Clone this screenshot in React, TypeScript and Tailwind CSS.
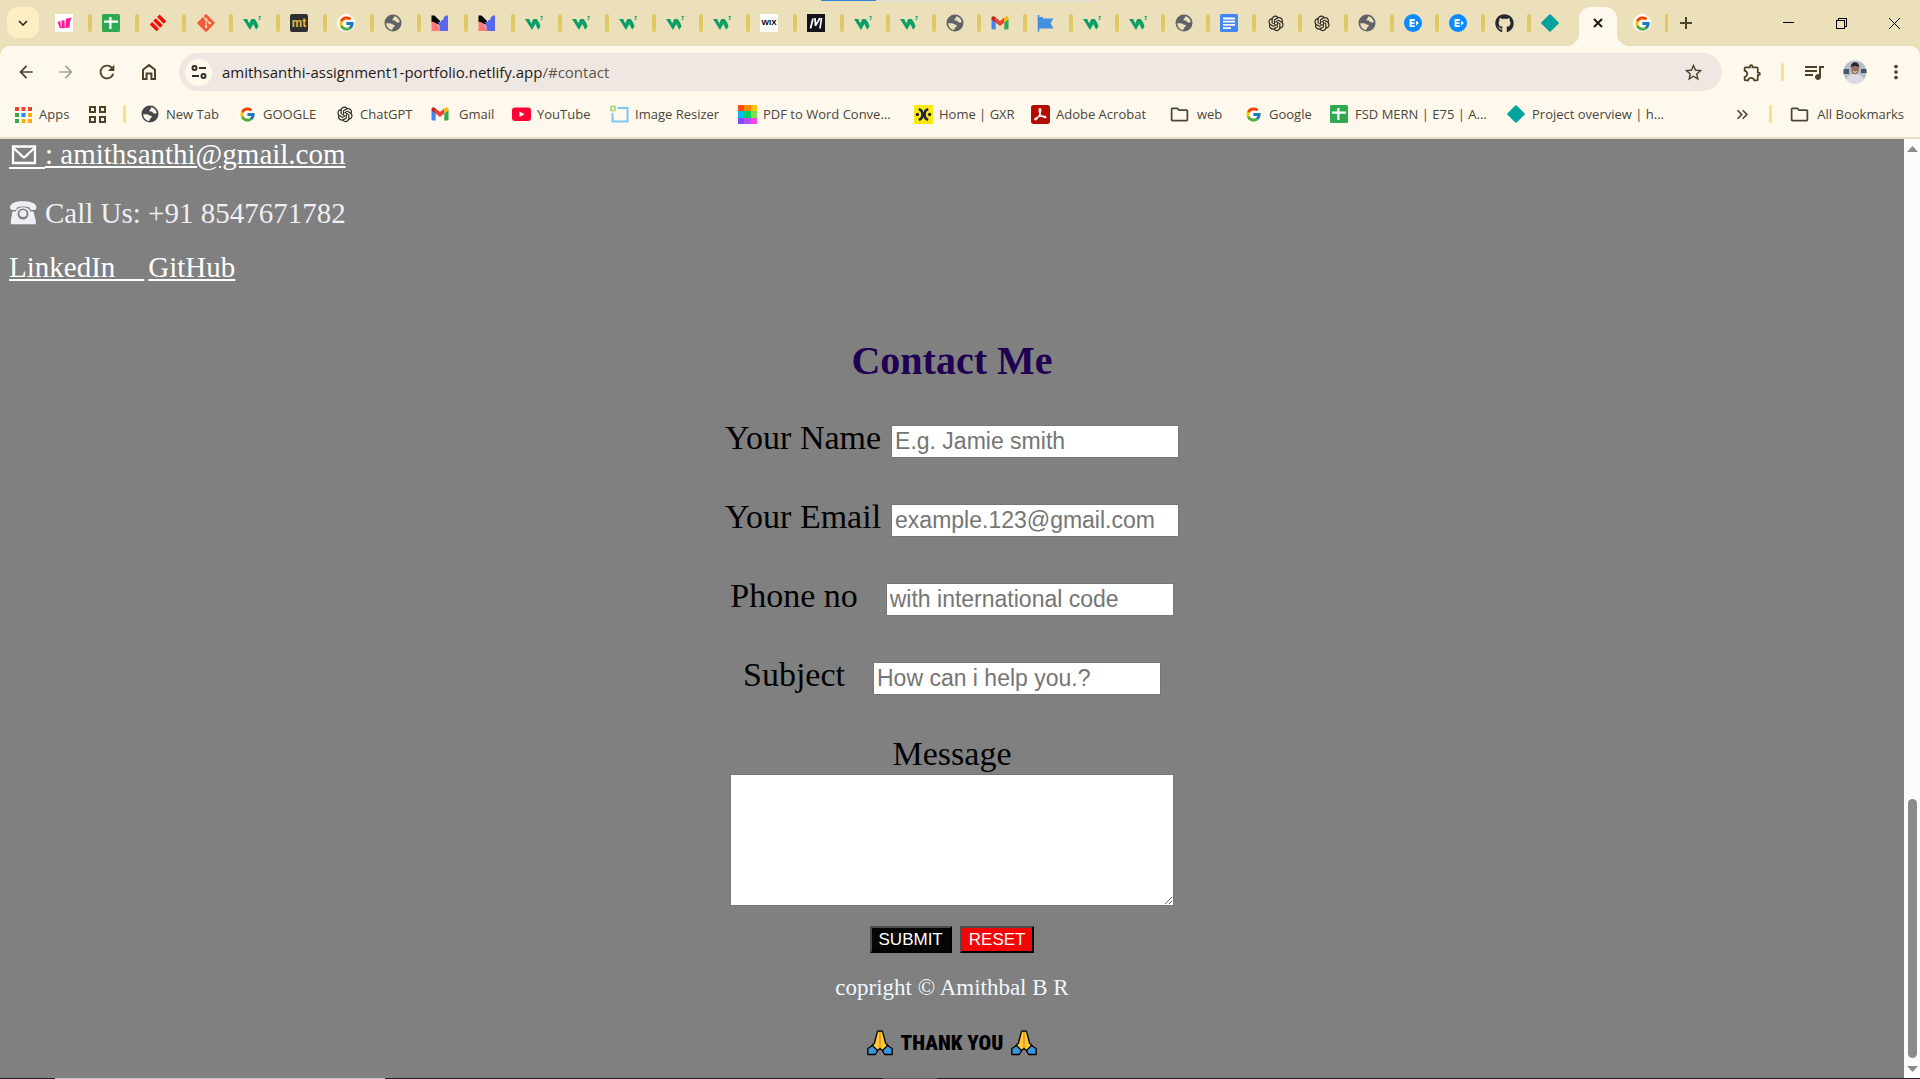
import React from "react";
import type { ReactNode } from "react";
import { FcGoogle } from "react-icons/fc";
import { FaGithub, FaGitAlt } from "react-icons/fa";
import { AiOutlineOpenAI } from "react-icons/ai";
import {
  MdArrowBack,
  MdArrowForward,
  MdRefresh,
  MdStarBorder,
  MdOutlineExtension,
  MdQueueMusic,
  MdMoreVert,
  MdExpandMore,
  MdOutlineFolder,
  MdKeyboardDoubleArrowRight,
} from "react-icons/md";

const W3 = () => (
  <svg viewBox="0 0 18 18" className="size-[18px]" fill="none">
    <path d="M0 5h4.200l2 4.500L8.300 5h3.400l2.700 4 1.100 3.500-2.300 3.300L10.300 10l-3.300 6z" fill="#0a9f66" />
    <path d="M15.500 2.500h2l-1 1.600c1 .2 1.300 1.800-.9 1.600" stroke="#0a9f66" strokeWidth="0.9" />
  </svg>
);

const Globe = ({ dark = false }: { dark?: boolean }) => (
  <svg viewBox="0 0 18 18" className="size-[18px]">
    <circle cx="9" cy="9" r="8.500" fill={dark ? "#44474b" : "#5f6368"} />
    <path
      d="M10.300 2.200c2.900.5 5 2.800 5.500 5.700-1 .7-2.200.8-3.400.3-.9-.4-.6-1.500-1.700-1.700-1.200-.2-2 .3-2.200-.8-.2-1 .9-1 1.200-1.800zM2.200 9.200h3.600c1.500 0 2 .8 3 1.300 1 .4 2 .2 2 1.200 0 1.300-1.500 1.300-1.900 2.200-.3.800-.2 1.400-.9 2C4.700 15.500 2.300 12.700 2.200 9.200z"
      fill={dark ? "#fff8ec" : "#ece0bb"}
    />
  </svg>
);

const Google = () => (
  <span className="flex size-[18px] items-center justify-center rounded-full bg-white">
    <FcGoogle size={17} />
  </span>
);

const Gmail = () => (
  <svg viewBox="0 0 18 18" className="size-[18px]">
    <path d="M0.500 5v9.300c0 .6.500 1.200 1.200 1.200h3V8z" fill="#4285f4" />
    <path d="M17.500 5v9.300c0 .6-.5 1.200-1.200 1.200h-3V8z" fill="#34a853" />
    <path d="M4.700 3.600 9 6.900l4.300-3.300v5L9 11.900 4.700 8.600z" fill="#ea4335" />
    <path d="M4.700 8.600V3.600L3.500 2.700C2.200 1.800.5 2.600.500 4.200v1.200z" fill="#c5221f" />
    <path d="M13.300 8.600V3.600l1.200-.9c1.300-.9 3-.1 3 1.500v1.200z" fill="#fbbc04" />
  </svg>
);

const Sheets = () => (
  <svg viewBox="0 0 18 18" className="size-[18px]">
    <rect width="18" height="18" rx="1.500" fill="#2fa84f" />
    <path d="M7.300 3h2.200v3.600H16v2.200H9.500V15H7.300V8.800H2V6.600h5.300z" fill="#fff" />
  </svg>
);

const Neon = () => (
  <svg viewBox="0 0 18 18" className="size-[18px]">
    <path d="M0.500 1.500h3L9 7v4L.500 8z" fill="#000" />
    <path d="M0.500 7.500C5 8 8.500 12 9 17H.500z" fill="#ff7a7a" />
    <path d="M6.500 7.500c2 1 3.500 1 4-1.500l1.500 0 1-3 2-1.500h2V17H9C8.800 13 8 10 6.500 7.500z" fill="#5a66f0" />
  </svg>
);

const PinkMark = () => (
  <svg viewBox="0 0 18 18" className="size-[18px]">
    <rect width="18" height="18" fill="#fff" />
    <path d="M2.500 7.800l2.800-.5.8 4.300.4-5 3-.3.300 5.200 1.200-6.700 5.800-1.300-1.500 3-.8 6.900-6.300.9-3.500-.4z" fill="#ff1a9a" />
    <path d="M6.200 8v5M10.300 7v6.500" stroke="#fff" strokeWidth="0.700" />
  </svg>
);

const RedStripes = () => (
  <svg viewBox="0 0 18 18" className="size-[18px]">
    <g stroke="#fb0a0a" strokeWidth="3.500">
      <path d="M9.300 1.800l6.700 6.700M5.500 5.500l7 7M2 9.300l6.700 6.700" />
    </g>
  </svg>
);

const Mt = () => (
  <span className="flex size-[18px] items-center justify-center rounded-xs bg-[#2f2f33] font-['Roboto'] text-[12px] leading-none font-bold text-[#e0b93a]">
    mt
  </span>
);

const Wix = () => (
  <span className="flex size-[18px] items-center justify-center bg-white font-['Liberation_Sans'] text-[8px] leading-none font-bold text-black">
    WIX
  </span>
);

const DarkM = () => (
  <svg viewBox="0 0 18 18" className="size-[18px]">
    <rect width="18" height="18" fill="#12121c" />
    <path d="M3.500 14.500 6 4.500M8 4l.5 8M8.500 11.500 13 4M14.500 4 13 14.500" fill="none" stroke="#fff" strokeWidth="1.700" />
  </svg>
);

const Flag = () => (
  <svg viewBox="0 0 18 18" className="size-[18px]">
    <path d="M1.500 1v16.500" stroke="#3b8ae6" strokeWidth="1.600" />
    <path d="M2 3h4v1.500h10.500L13.500 9l3 5.500H2z" fill="#458fe3" />
  </svg>
);

const Docs = () => (
  <svg viewBox="0 0 18 18" className="size-[18px]">
    <rect width="18" height="18" rx="1.500" fill="#4285f4" />
    <path d="M3 4.500h12M3 7.700h12M3 10.900h12M3 14.100h8" stroke="#fff" strokeWidth="1.800" />
  </svg>
);

const Ecircle = () => (
  <svg viewBox="0 0 18 18" className="size-[18px]">
    <circle cx="9" cy="9" r="9" fill="#0a8bff" />
    <path d="M10.800 6H6.500v6.200h4.300M6.500 9.100h4" fill="none" stroke="#fff" strokeWidth="1.800" />
    <path d="M12 6.800l3 2.300-3 2.300z" fill="#fff" />
  </svg>
);

const Diamond = () => (
  <svg viewBox="0 0 18 18" className="size-[18px]">
    <path d="M9 1.200 16.800 9 9 16.800 1.200 9z" fill="#05a29e" stroke="#05a29e" strokeWidth="2" strokeLinejoin="round" />
  </svg>
);

const Gpt = () => <AiOutlineOpenAI size={20} color="#2c2a22" />;
const Git = () => <FaGitAlt size={20} color="#f4593a" />;

const AppsGrid = () => (
  <svg viewBox="0 0 17 17" className="size-[17px]">
    <path d="M0 1h4v4H0zM6.500 1h4v4h-4zM13 1h4v4h-4z" fill="#ea4335" />
    <path d="M0 7h4v4H0zM0 13h4v4H0z" fill="#34a853" />
    <path d="M6.500 7h4v4h-4z" fill="#1a8cff" />
    <path d="M6.500 13h4v4h-4zM13 7h4v4h-4zM13 13h4v4h-4z" fill="#fbab04" />
  </svg>
);

const YouTube = () => (
  <svg viewBox="0 0 19 18" className="h-[18px] w-[19px]">
    <rect y="2.500" width="19" height="13.500" rx="3" fill="#ff0033" />
    <path d="M7.500 6.500l5 2.700-5 2.700z" fill="#fff" />
  </svg>
);

const Resizer = () => (
  <svg viewBox="0 0 19 18" className="h-[18px] w-[19px]" fill="none">
    <path d="M7.500 3h10v13.500H2.500V8" stroke="#7cc6f4" strokeWidth="2" />
    <rect x="1" y="1.500" width="4" height="4" stroke="#a3d977" strokeWidth="1.600" />
  </svg>
);

const RainbowGrid = () => (
  <svg viewBox="0 0 18 18" className="size-[19px]" shapeRendering="crispEdges">
    <path d="M0 0h6v6H0z" fill="#ff4d12" />
    <path d="M6 0h6v6H6z" fill="#ff8a00" />
    <path d="M12 0h6v6h-6z" fill="#ffc400" />
    <path d="M0 6h6v6H0z" fill="#00b8f5" />
    <path d="M6 6h6v6H6z" fill="#00cf62" />
    <path d="M12 6h6v6h-6z" fill="#7ae04a" />
    <path d="M0 12h6v6H0z" fill="#7d4dff" />
    <path d="M6 12h6v6H6z" fill="#b84dff" />
    <path d="M12 12h6v6h-6z" fill="#ff45e6" />
  </svg>
);

const Gxr = () => (
  <svg viewBox="0 0 18 18" className="size-[19px]">
    <rect width="18" height="18" fill="#fbea12" />
    <path d="M4.500 4c2 .3 3.500 2 3.500 5s-1.500 4.700-3.500 5M13.500 4c-2 .3-3.500 2-3.500 5s1.500 4.700 3.500 5" fill="none" stroke="#1d2433" strokeWidth="2.400" />
    <circle cx="3.200" cy="9" r="1.600" fill="#1d2433" />
    <circle cx="14.800" cy="9" r="1.600" fill="#1d2433" />
  </svg>
);

const Acrobat = () => (
  <svg viewBox="0 0 18 18" className="size-[19px]">
    <rect width="18" height="18" rx="2.500" fill="#b30b00" />
    <path
      d="M8.300 3.500c1.800-.3 1 4-.6 6.600-1.200 2-2.700 4.100-3.700 3.900-1.300-.6 1-2.400 4-3.100 2.800-.7 6.200-.5 6.200.5 0 1.200-3.100.4-4.700-1.500C7.700 7.900 7 3.900 8.300 3.500z"
      fill="none"
      stroke="#fff"
      strokeWidth="1.200"
    />
  </svg>
);

const HomeIcon = () => (
  <svg viewBox="0 0 16 18" className="h-[18px] w-4" fill="none" stroke="#4b4328" strokeWidth="2">
    <path d="M2 6.800 8 2l6 4.800V16h-3.600v-5.500H5.600V16H2z" />
  </svg>
);

const Tune = () => (
  <svg viewBox="0 0 16 16" className="size-4" fill="none" stroke="#33302a" strokeWidth="2">
    <circle cx="3.500" cy="4" r="2" />
    <path d="M8 4h7M1 12h7" />
    <circle cx="12.500" cy="12" r="2" />
  </svg>
);

const Avatar = () => (
  <svg viewBox="0 0 24 24" className="size-6">
    <defs>
      <clipPath id="avatar-clip">
        <circle cx="12" cy="12" r="11.500" />
      </clipPath>
    </defs>
    <g clipPath="url(#avatar-clip)">
      <rect width="24" height="24" fill="#b4bcc6" />
      <path d="M0 9h6v5H0zM18 9h6v4h-6z" fill="#4b5460" />
      <path d="M2 24c0-7 5-10 10-10s10 3 10 10z" fill="#dcd8e4" />
      <ellipse cx="12" cy="9" rx="3.800" ry="5.300" fill="#9a6f62" />
      <path d="M7.700 7.500c0-7 8.600-7 8.600 0-2-2-6.600-2-8.600 0z" fill="#29242a" />
      <path d="M10.300 11.500c1.200 1 2.200 1 3.400 0" stroke="#fff" strokeWidth="1" fill="none" />
    </g>
  </svg>
);

const Hands = () => (
  <svg viewBox="0 0 26 26" className="size-[26px]" stroke="#000" strokeWidth="1.300" strokeLinejoin="round">
    <path d="M10.500 1.200c1-.7 2-.3 2.500.6.500-.9 1.500-1.300 2.500-.6L18.500 13l2.500 2.500-5 5.500-3-2.500-3 2.500-5-5.500L7.500 13z" fill="#ffc83d" />
    <path d="M5.500 15.500 10.500 20.500 8.500 24.500H.8V18.500z" fill="#3a96dd" />
    <path d="M20.500 15.500 15.500 20.500l2 4h7.700V18.500z" fill="#3a96dd" />
    <path d="M13 2v16" stroke="#e09a1c" strokeWidth="1.600" />
  </svg>
);

const Envelope = () => (
  <svg viewBox="0 0 26 20" className="h-5 w-[26px]" fill="none" stroke="#fff" strokeWidth="2.300">
    <path d="M2 1.500h22v16.500H2zM2.500 3l9.300 8.700c.8.700 1.600.7 2.400 0L23.500 3" />
  </svg>
);

const Telephone = () => (
  <svg viewBox="0 0 28 26" className="h-[26px] w-7" fill="#efeff4">
    <path d="M1 7.500C1 3 7 1.200 14 1.200S27.500 3 27.500 7.500c0 2-1.500 2.500-4 2.500-2 0-2.700-.8-2.700-2.300C18.500 6 10 6 7.800 7.700 7.800 9.200 7 10 5 10c-2.500 0-4-.5-4-2.500z" />
    <path
      fillRule="evenodd"
      d="M3.500 11.500h3.200C7.500 9 10 7.300 14 7.300s6.700 1.700 7.500 4.200h3l2.300 9.500v3.200H1.800V21zM14 8.500a5.500 5.500 0 100 11 5.500 5.500 0 000-11z"
    />
    <circle cx="14" cy="13.500" r="3.600" />
  </svg>
);

const Triangle = ({ up = false }: { up?: boolean }) => (
  <svg viewBox="0 0 11 6" className="h-1.5 w-[11px]" fill="#8b8b8b">
    <path d={up ? "M0 6 5.500 0 11 6z" : "M0 0h11L5.500 6z"} />
  </svg>
);

const tabsA: [string, ReactNode][] = [
  ["Wix site", <PinkMark />],
  ["Sheet", <Sheets />],
  ["Entri", <RedStripes />],
  ["Git", <Git />],
  ["W3Schools", <W3 />],
  ["mt", <Mt />],
  ["Google", <Google />],
  ["Page", <Globe />],
  ["Mockup", <Neon />],
  ["Mockup", <Neon />],
  ["W3Schools", <W3 />],
  ["W3Schools", <W3 />],
  ["W3Schools", <W3 />],
  ["W3Schools", <W3 />],
  ["W3Schools", <W3 />],
  ["Wix", <Wix />],
  ["M", <DarkM />],
];

const tabsB: [string, ReactNode][] = [
  ["W3Schools", <W3 />],
  ["W3Schools", <W3 />],
  ["Page", <Globe />],
  ["Gmail", <Gmail />],
  ["Flag", <Flag />],
  ["W3Schools", <W3 />],
  ["W3Schools", <W3 />],
  ["Page", <Globe />],
  ["Docs", <Docs />],
  ["ChatGPT", <Gpt />],
  ["ChatGPT", <Gpt />],
  ["Page", <Globe />],
  ["Entri", <Ecircle />],
  ["Entri", <Ecircle />],
  ["GitHub", <FaGithub size={19} color="#24292f" />],
];

const Tab = ({ label, icon }: { label: string; icon: ReactNode }) => (
  <button aria-label={label} className="flex h-[18px] flex-1 items-center justify-between pl-2.5">
    {icon}
    <span className="h-[18px] w-1 rounded-full bg-[#e0c862]" />
  </button>
);

const bookmarks: { label: string; icon: ReactNode; width: string; wide?: boolean }[] = [
  { label: "New Tab", icon: <Globe dark />, width: "w-[97px]" },
  { label: "GOOGLE", icon: <Google />, width: "w-[97px]" },
  { label: "ChatGPT", icon: <Gpt />, width: "w-[96px]" },
  { label: "Gmail", icon: <Gmail />, width: "w-[81px]", wide: true },
  { label: "YouTube", icon: <YouTube />, width: "w-[98px]" },
  { label: "Image Resizer", icon: <Resizer />, width: "w-[128px]" },
  { label: "PDF to Word Conve...", icon: <RainbowGrid />, width: "w-[176px]" },
  { label: "Home | GXR", icon: <Gxr />, width: "w-[117px]" },
  { label: "Adobe Acrobat", icon: <Acrobat />, width: "w-[138px]" },
  { label: "web", icon: <MdOutlineFolder size={21} />, width: "w-[75px]", wide: true },
  { label: "Google", icon: <Google />, width: "w-[86px]" },
  { label: "FSD MERN | E75 | A...", icon: <Sheets />, width: "w-[177px]" },
  { label: "Project overview | h...", icon: <Diamond />, width: "w-[170px]" },
];

const fields = [
  { id: "name", label: "Your Name", placeholder: "E.g. Jamie smith", type: "text", gap: "gap-2.5" },
  { id: "email", label: "Your Email", placeholder: "example.123@gmail.com", type: "email", gap: "gap-2.5" },
  { id: "phone", label: "Phone no", placeholder: "with international code", type: "tel", gap: "gap-7" },
  { id: "subject", label: "Subject", placeholder: "How can i help you.?", type: "text", gap: "gap-7" },
];

function TabStrip() {
  return (
    <div className="relative flex h-[46px] bg-[#ece0bb]">
      <div className="absolute top-0 left-[821px] flex h-px w-[276px] bg-[#dedede]">
        <span className="w-[55px] bg-[#2b88d8]" />
      </div>
      <button aria-label="Search tabs" className="mt-[7px] ml-[7px] flex h-[31px] w-8 items-center justify-center rounded-[10px] bg-[#fdefc3] text-[#1f1b10]">
        <MdExpandMore size={18} />
      </button>
      <div className="ml-1.5 flex w-[799px] items-center">
        {tabsA.map(([label, icon], i) => (
          <Tab key={i} label={label} icon={icon} />
        ))}
      </div>
      <div className="flex w-[687px] items-center">
        {tabsB.map(([label, icon], i) => (
          <Tab key={i} label={label} icon={icon} />
        ))}
      </div>
      <button aria-label="Netlify" className="ml-2.5">
        <Diamond />
      </button>
      <div className="relative mt-[7px] ml-5 flex w-[38px] justify-center rounded-t-[12px] bg-[#fff8ec]">
        <span className="absolute bottom-0 -left-3 size-3 bg-[radial-gradient(circle_at_top_left,transparent_12px,#fff8ec_12px)]" />
        <span className="absolute -right-3 bottom-0 size-3 bg-[radial-gradient(circle_at_top_right,transparent_12px,#fff8ec_12px)]" />
        <button aria-label="Close tab" className="flex h-8 items-center">
          <svg viewBox="0 0 10 10" className="size-2.5" stroke="#1f1b10" strokeWidth="2">
            <path d="M1 1l8 8M9 1L1 9" />
          </svg>
        </button>
      </div>
      <button aria-label="Google" className="ml-4">
        <Google />
      </button>
      <span className="mt-3.5 ml-3.5 h-[18px] w-[3px] rounded-full bg-[#e0c862]" />
      <button aria-label="New tab" className="ml-3">
        <svg viewBox="0 0 12 12" className="size-3" stroke="#4b4328" strokeWidth="2">
          <path d="M6 0v12M0 6h12" />
        </svg>
      </button>
      <div className="mr-5 ml-auto flex items-center gap-[42px]">
        <button aria-label="Minimize">
          <svg viewBox="0 0 11 11" className="size-[11px]" stroke="#000" strokeWidth="1" shapeRendering="crispEdges">
            <path d="M0 4.500h11" />
          </svg>
        </button>
        <button aria-label="Restore">
          <svg viewBox="0 0 11 11" className="size-[11px]" fill="none" stroke="#000" strokeWidth="1" shapeRendering="crispEdges">
            <path d="M.5 2.500h8v8h-8zM2.500 2.500v-2h8v8h-2" />
          </svg>
        </button>
        <button aria-label="Close">
          <svg viewBox="0 0 11 11" className="size-[11px]" stroke="#000" strokeWidth="1">
            <path d="M0 0l11 11M11 0L0 11" />
          </svg>
        </button>
      </div>
    </div>
  );
}

function Toolbar() {
  return (
    <div className="bg-[#ece0bb]">
      <div className="flex items-center rounded-t-[10px] bg-[#fff8ec] pt-[7px] pr-[13px] pb-2 pl-4 text-[#4b4328]">
        <button aria-label="Back">
          <MdArrowBack size={20} />
        </button>
        <button aria-label="Forward" className="ml-5 text-[#a8a394]">
          <MdArrowForward size={20} />
        </button>
        <button aria-label="Reload" className="ml-5">
          <MdRefresh size={22} />
        </button>
        <button aria-label="Home" className="ml-[23px]">
          <HomeIcon />
        </button>
        <div className="ml-[22px] flex h-[38px] flex-1 items-center rounded-full bg-[#efe7e1] pr-[18px] pl-1.5">
          <button aria-label="Site information" className="flex size-[27px] items-center justify-center rounded-full bg-[#fff8ec]">
            <Tune />
          </button>
          <div className="ml-2.5 flex-1 text-[15px] leading-6 text-[#1f1b16]">
            amithsanthi-assignment1-portfolio.netlify.app<span className="text-[#5a554c]">/#contact</span>
          </div>
          <button aria-label="Bookmark this page">
            <MdStarBorder size={21} />
          </button>
        </div>
        <button aria-label="Extensions" className="ml-5">
          <MdOutlineExtension size={21} />
        </button>
        <span className="ml-[18px] h-[18px] w-[3px] rounded-full bg-[#fce083]" />
        <button aria-label="Media" className="ml-[18px]">
          <MdQueueMusic size={24} />
        </button>
        <button aria-label="Profile" className="ml-[17px]">
          <Avatar />
        </button>
        <button aria-label="Menu" className="ml-[18px]">
          <MdMoreVert size={22} />
        </button>
      </div>
    </div>
  );
}

function BookmarksBar() {
  return (
    <nav className="flex h-10 items-center border-b-2 border-[#e6dfca] bg-[#fff8ec] pr-4 pb-2 pl-[15px] text-[13px] leading-5 whitespace-nowrap text-[#4a463d]">
      <a href="#apps" className="flex w-[74px] items-center gap-[7px]">
        <AppsGrid />
        Apps
      </a>
      <button aria-label="Tab groups" className="mr-[17px]">
        <svg viewBox="0 0 17 17" className="size-[17px]" fill="none" stroke="#4b4328" strokeWidth="2">
          <path d="M1 1h5v5H1zM11 1h5v5h-5zM1 11h5v5H1zM11 11h5v5h-5z" />
        </svg>
      </button>
      <span className="mr-[15px] h-[18px] w-[3px] rounded-full bg-[#fce083]" />
      {bookmarks.map((b, i) => (
        <a key={i} href="#bookmark" className={"flex items-center " + b.width}>
          <span className={b.wide ? "w-7 shrink-0" : "w-[25px] shrink-0"}>{b.icon}</span>
          {b.label}
        </a>
      ))}
      <button aria-label="More bookmarks" className="ml-auto">
        <MdKeyboardDoubleArrowRight size={19} />
      </button>
      <span className="mx-[17px] h-[18px] w-[3px] rounded-full bg-[#fce083]" />
      <a href="#all" className="flex items-center gap-[7px]">
        <MdOutlineFolder size={21} />
        All Bookmarks
      </a>
    </nav>
  );
}

function ContactPage() {
  return (
    <main className="flex-1 bg-[#808080] font-['Liberation_Serif',serif]">
      <div className="flex flex-col items-start px-[9px] text-[29px] leading-[30px] text-white">
        <a href="mailto:amithsanthi@gmail.com" className="flex items-start">
          <span className="h-[30px] w-9 border-b-2 border-white pt-1.5 pl-0.5">
            <Envelope />
          </span>
          <span className="underline">: amithsanthi@gmail.com</span>
        </a>
        <p className="mt-[29px] flex items-center gap-2 text-[#efeff4]">
          <Telephone />
          Call Us: +91 8547671782
        </p>
        <p className="mt-6 flex gap-1">
          <a href="#linkedin" className="whitespace-pre underline">
            {"LinkedIn\u00a0\u00a0\u00a0\u00a0"}
          </a>
          <a href="#github" className="underline">
            GitHub
          </a>
        </p>
      </div>

      <form className="mt-[57px] flex flex-col items-center" onSubmit={(e) => e.preventDefault()}>
        <h1 className="text-[40px] leading-[44px] font-bold text-[#200052]">Contact Me</h1>
        <div className="mt-[35px] flex flex-col items-center gap-[39px] text-[34px] leading-10 text-black">
          {fields.map((f) => (
            <div key={f.id} className={"flex h-10 items-baseline " + f.gap}>
              <label htmlFor={f.id}>{f.label}</label>
              <input
                id={f.id}
                type={f.type}
                placeholder={f.placeholder}
                className="h-[33px] w-72 border border-[#767676] bg-white px-[3px] py-0.5 font-['Liberation_Sans',sans-serif] text-[23px] leading-[27px] placeholder:text-[#757575]"
              />
            </div>
          ))}
          <label htmlFor="message">Message</label>
        </div>
        <textarea id="message" className="h-[132px] w-[444px] border border-[#767676] bg-white p-[3px] font-['Liberation_Mono',monospace] text-[17px]" />
        <div className="mt-5 flex gap-2 font-['Liberation_Sans',sans-serif] text-[17px] leading-[19px] text-white">
          <button type="submit" className="border-2 border-t-[#4c4c4c] border-r-black border-b-black border-l-[#4c4c4c] bg-[#050505] px-[7px] py-0.5">
            SUBMIT
          </button>
          <button type="reset" className="border-2 border-t-[#4c4c4c] border-r-black border-b-black border-l-[#4c4c4c] bg-[#f20505] px-[7px] py-0.5">
            RESET
          </button>
        </div>
      </form>

      <footer className="mt-[22px] flex flex-col items-center pb-[22px]">
        <p className="text-[23px] leading-[26px] text-[#f0f8ff]">copright © Amithbal B R</p>
        <p className="mt-[29px] flex items-center gap-2 font-[Impact,'Roboto_Condensed','Open_Sans_Condensed','Liberation_Sans_Narrow','Liberation_Sans',sans-serif] text-[21px] leading-[26px] font-black text-black">
          <Hands />
          THANK YOU
          <Hands />
        </p>
      </footer>
    </main>
  );
}

export default function App() {
  return (
    <div className="flex min-h-screen flex-col bg-[#808080] font-['Open_Sans',sans-serif]">
      <header>
        <TabStrip />
        <Toolbar />
        <BookmarksBar />
      </header>
      <div className="flex flex-1">
        <ContactPage />
        <div className="flex w-4 flex-col items-center justify-between bg-[#fcfcfc] pt-[7px] pb-1.5">
          <Triangle up />
          <div className="flex flex-1 flex-col justify-end pb-2">
            <div className="h-[259px] w-[9px] rounded-full bg-[#8b8b8b]" />
          </div>
          <Triangle />
        </div>
      </div>
      <div className="flex h-px bg-[#222222]">
        <span className="ml-[55px] w-[330px] bg-[#c8c8c8]" />
        <span className="ml-[498px] w-[54px] bg-[#5a5a5a]" />
      </div>
    </div>
  );
}
